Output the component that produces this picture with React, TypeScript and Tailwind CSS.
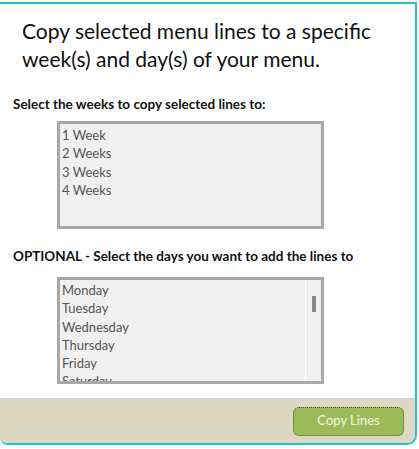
const weeks = ["1 Week", "2 Weeks", "3 Weeks", "4 Weeks"];
const days = ["Monday", "Tuesday", "Wednesday", "Thursday", "Friday", "Saturday", "Sunday"];

export default function App() {
  return (
    <div className="w-[419px] h-[449px] bg-white pt-[2px] font-['Lato',sans-serif]">
      <div className="w-[417px] h-[443px] flex flex-col border-t-2 border-r-2 border-b-2 border-[#19c4cc] rounded-br-[10px] rounded-bl-[8px] overflow-hidden">
        <div className="flex-1 bg-white">
          <h1 className="pl-[22px] pt-[13px] text-[21px] leading-[28px] text-[#111]">
            Copy selected menu lines to a specific
            <br />
            week(s) and day(s) of your menu.
          </h1>

          <div className="pl-[13px] pt-[22px] text-[13.5px] leading-[18px] font-bold text-[#111]">
            Select the weeks to copy selected lines to:
          </div>
          <div className="ml-[57px] mt-[8px] w-[267px] h-[108px] border-[3px] border-[#a8a8a8] bg-[#f0f0f0] pl-[2px] pt-[2px]">
            {weeks.map((w) => (
              <div key={w} className="text-[13px] leading-[18.3px] text-[#555]">
                {w}
              </div>
            ))}
          </div>

          <div className="pl-[13px] pt-[18px] text-[13.5px] leading-[18px] font-bold text-[#111]">
            OPTIONAL - Select the days you want to add the lines to
          </div>
          <div className="ml-[57px] mt-[12px] w-[267px] h-[107px] border-[3px] border-[#a8a8a8] bg-[#f0f0f0] flex">
            <div className="flex-1 overflow-hidden pl-[2px] pt-[1px]">
              {days.map((d) => (
                <div key={d} className="text-[13px] leading-[18.3px] text-[#555]">
                  {d}
                </div>
              ))}
            </div>
            <div className="w-[16px] border-l border-white pt-[16px] flex justify-center">
              <div className="w-[4px] h-[16px] bg-[#888]" />
            </div>
          </div>
        </div>

        <div className="h-[45px] bg-[#ddd8c3] border-t border-[#cfcfcf] flex items-center justify-end pr-[11px]">
          <button className="w-[111px] h-[29px] rounded-[6px] bg-[#9bbb59] border-[1.5px] border-dotted border-[#4a5e24] text-[13px] text-[#f2f5e4]">
            Copy Lines
          </button>
        </div>
      </div>
    </div>
  );
}
